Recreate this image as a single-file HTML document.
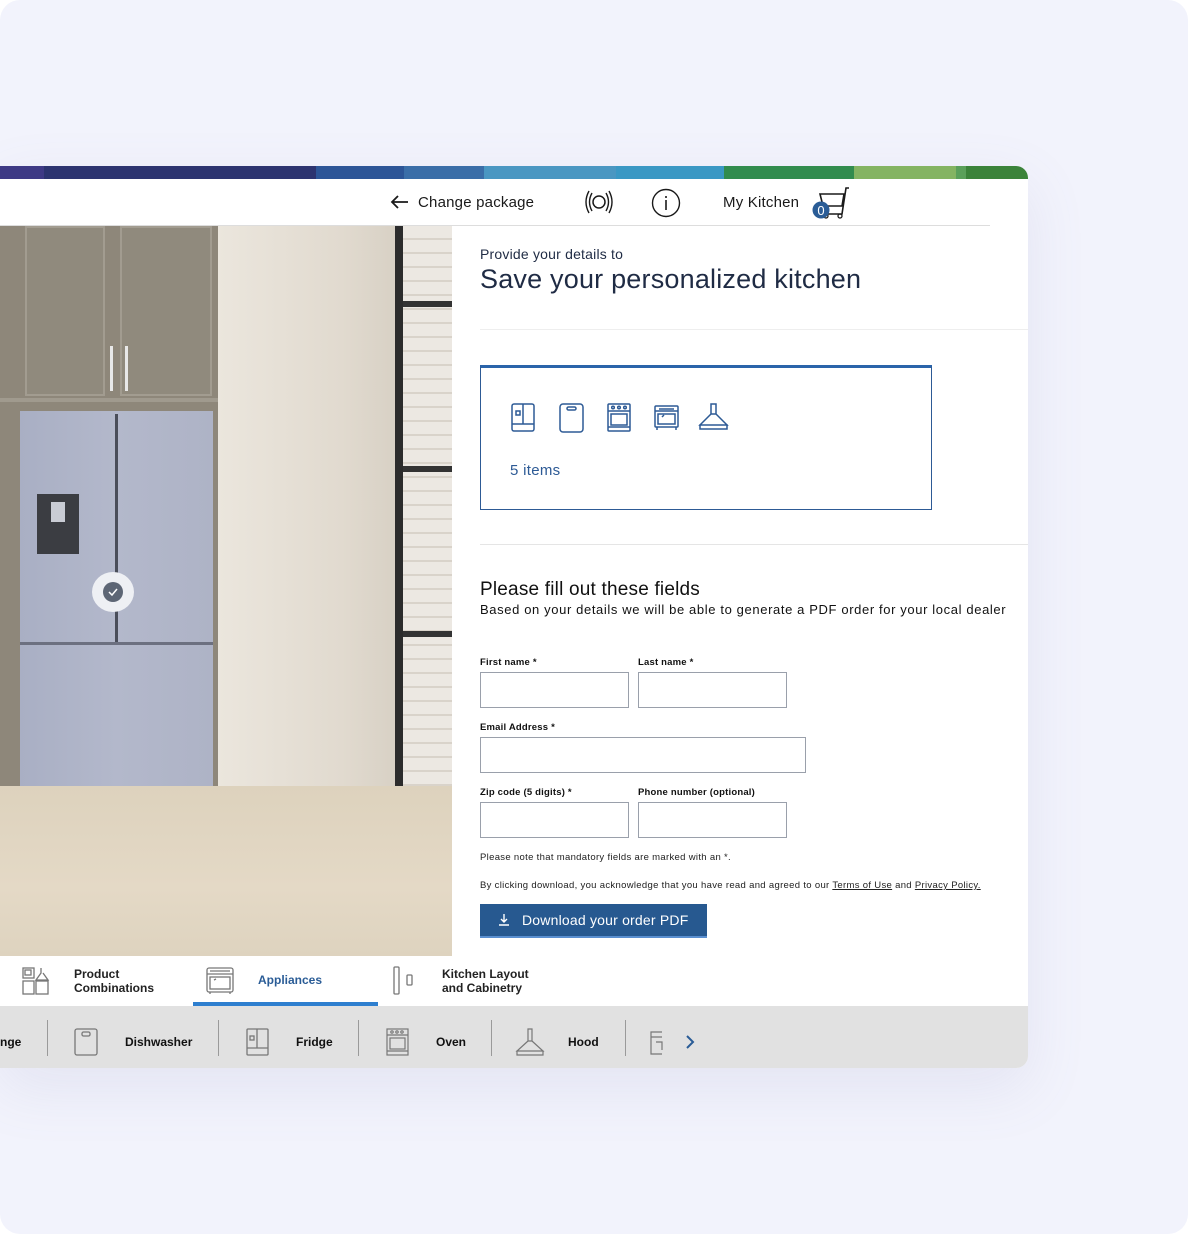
<!DOCTYPE html>
<html><head><meta charset="utf-8"><style>
*{box-sizing:border-box;margin:0;padding:0}
body{width:1188px;height:1234px;background:#fff;font-family:"Liberation Sans",sans-serif;color:#1f2b44;overflow:hidden;position:relative}
.bg{position:absolute;left:0;top:0;width:1188px;height:1234px;background:#f2f3fc;border-radius:20px}
.card{position:absolute;left:0;top:166px;width:1028px;height:902px;background:#fff;border-radius:0 12px 12px 0;overflow:hidden;box-shadow:0 20px 60px rgba(120,120,170,.12)}
.bar{position:absolute;left:0;top:0;height:13px;width:1028px;background:linear-gradient(90deg,#3e3a85 0 44px,#2c3470 44px 316px,#2c5597 316px 404px,#3a6ea8 404px 484px,#4a97c2 484px 616px,#3a98c4 616px 724px,#318c4e 724px 854px,#84b462 854px 956px,#5aa05a 956px 966px,#3b833a 966px)}
.abs{position:absolute}
.hdr{font-size:15px;color:#1a1a1a;letter-spacing:0.2px}
.img{position:absolute;left:0;top:60px;width:452px;height:730px;background:#e6e0d6;overflow:hidden}
.lbl{font-size:9.5px;font-weight:bold;color:#111;letter-spacing:0.2px}
.inp{position:absolute;border:1px solid #9aa0ab;height:36px;background:#fff}
.small{font-size:9.5px;color:#222;letter-spacing:0.32px}
.tab{font-size:12px;font-weight:bold;color:#222;line-height:14px}
.sub{font-size:12px;font-weight:bold;color:#111}
.sep{position:absolute;top:1020px;width:1px;height:36px;background:#9a9a9a}
</style></head><body>
<div class="bg"></div>
<div class="card">
<div class="bar"></div>
<svg class="abs" style="left:390px;top:28px" width="20" height="16" viewBox="0 0 20 16"><path d="M18 8H2M8 2L2 8l6 6" fill="none" stroke="#1a1a1a" stroke-width="1.8"/></svg>
<div class="abs hdr" style="left:418px;top:28px">Change package</div>
<svg class="abs" style="left:584px;top:24px" width="30" height="24" viewBox="0 0 30 24"><circle cx="15" cy="12" r="6" fill="none" stroke="#1a1a1a" stroke-width="1.5"/><path d="M8 3Q3 12 8 21M5 1Q-1 12 5 23M22 3Q27 12 22 21M25 1Q31 12 25 23" fill="none" stroke="#1a1a1a" stroke-width="1.4"/></svg>
<svg class="abs" style="left:651px;top:22px" width="30" height="30" viewBox="0 0 30 30"><circle cx="15" cy="15" r="13.5" fill="none" stroke="#1a1a1a" stroke-width="1.4"/><path d="M15 12v10M15 8v2" stroke="#1a1a1a" stroke-width="1.6"/></svg>
<div class="abs hdr" style="left:723px;top:28px">My Kitchen</div>
<svg class="abs" style="left:812px;top:20px" width="40" height="34" viewBox="0 0 40 34"><path d="M37 2h-3l-4 26H12M8 8h24l-2 12H11z" fill="none" stroke="#1a1a1a" stroke-width="1.6"/><circle cx="14" cy="30" r="2" fill="none" stroke="#1a1a1a" stroke-width="1.3"/><circle cx="28" cy="30" r="2" fill="none" stroke="#1a1a1a" stroke-width="1.3"/><circle cx="9" cy="24" r="8.5" fill="#2a5c96"/><text x="9" y="29" font-size="13" fill="#fff" text-anchor="middle" font-family="Liberation Sans">0</text></svg>
<div class="abs" style="left:0;top:59px;width:990px;height:1px;background:#ddd"></div>
<div class="img">
 <div class="abs" style="left:0;top:0;width:218px;height:560px;background:#8e877a"></div>
 <div class="abs" style="left:25px;top:0;width:80px;height:170px;background:#908a7d;border:2px solid #a29c90"></div>
 <div class="abs" style="left:120px;top:0;width:92px;height:170px;background:#908a7d;border:2px solid #a29c90"></div>
 <div class="abs" style="left:0;top:172px;width:218px;height:4px;background:#a09a8e"></div>
 <div class="abs" style="left:110px;top:120px;width:3px;height:45px;background:#e8e8e8"></div>
 <div class="abs" style="left:125px;top:120px;width:3px;height:45px;background:#e8e8e8"></div>
 <div class="abs" style="left:218px;top:0;width:177px;height:560px;background:linear-gradient(90deg,#ebe6dd,#e1dacf 70%,#d8d1c5)"></div>
 <div class="abs" style="left:395px;top:0;width:57px;height:600px;background:repeating-linear-gradient(180deg,#ece8e2 0 12px,#d9d3ca 12px 14px)"></div>
 <div class="abs" style="left:395px;top:0;width:8px;height:600px;background:#2c2c2c"></div>
 <div class="abs" style="left:403px;top:75px;width:49px;height:6px;background:#333"></div>
 <div class="abs" style="left:403px;top:240px;width:49px;height:6px;background:#333"></div>
 <div class="abs" style="left:403px;top:405px;width:49px;height:6px;background:#333"></div>
 <div class="abs" style="left:395px;top:560px;width:57px;height:8px;background:#333"></div>
 <div class="abs" style="left:0;top:560px;width:452px;height:170px;background:linear-gradient(180deg,#ddd2bd,#e4d9c6 60%,#ded3bf)"></div>
 <div class="abs" style="left:20px;top:185px;width:193px;height:375px;background:linear-gradient(90deg,#a9afc4,#b3b8cb 50%,#aeb3c6)"></div>
 <div class="abs" style="left:115px;top:188px;width:3px;height:228px;background:#4a4e5a"></div>
 <div class="abs" style="left:20px;top:416px;width:193px;height:3px;background:#6c7080"></div>
 <div class="abs" style="left:37px;top:268px;width:42px;height:60px;background:#3b3d42"></div>
 <div class="abs" style="left:51px;top:276px;width:14px;height:20px;background:#c9ccd4"></div>
 <div class="abs" style="left:92px;top:346px;width:42px;height:40px;border-radius:50%;background:#eef0f4"></div>
 <div class="abs" style="left:103px;top:356px;width:20px;height:20px;border-radius:50%;background:#5d6675"></div>
 <svg class="abs" style="left:105px;top:358px" width="16" height="16" viewBox="0 0 16 16"><path d="M4 8l3 3 5-6" fill="none" stroke="#fff" stroke-width="1.5"/></svg>
</div>
<div class="abs" style="left:480px;top:80px;font-size:14px;color:#1f2b44;letter-spacing:0.2px">Provide your details to</div>
<div class="abs" style="left:480px;top:98px;font-size:27px;color:#1f2b44;letter-spacing:0.2px">Save your personalized kitchen</div>
<div class="abs" style="left:480px;top:163px;width:548px;height:1px;background:#eee"></div>
<div class="abs" style="left:480px;top:199px;width:452px;height:145px;border:1px solid #2d5a95;border-top:3px solid #2a64aa"></div>
<svg class="abs" style="left:510px;top:236px" width="225" height="32" viewBox="0 0 225 32" fill="none" stroke="#2d5a95" stroke-width="1.5">
 <rect x="2" y="2" width="22" height="27" rx="2"/><path d="M13 2v20M2 22h22"/><rect x="6" y="9" width="4" height="4"/>
 <rect x="50" y="2" width="23" height="28" rx="3"/><rect x="57" y="5" width="9" height="3" rx="1.5"/>
 <rect x="98" y="2" width="22" height="27" rx="1"/><path d="M98 9h22"/><circle cx="103" cy="5.5" r="1.3"/><circle cx="109" cy="5.5" r="1.3"/><circle cx="115" cy="5.5" r="1.3"/><rect x="101" y="12" width="16" height="11"/><path d="M98 25h22"/>
 <rect x="145" y="4" width="23" height="21" rx="1"/><path d="M145 9h23M149 7h15" /><rect x="148" y="12" width="17" height="10"/><path d="M147 25v3M166 25v3M152 15l2 -2"/>
 <path d="M201 2h5v10h-5zM201 12l-11 11h27l-11-11M190 23h27v4h-27z"/>
</svg>
<div class="abs" style="left:510px;top:296px;font-size:15px;color:#2d5a95;letter-spacing:0.3px">5 items</div>
<div class="abs" style="left:480px;top:378px;width:548px;height:1px;background:#e5e5e5"></div>
<div class="abs" style="left:480px;top:413px;font-size:19px;color:#111;letter-spacing:0.2px">Please fill out these fields</div>
<div class="abs" style="left:480px;top:436px;font-size:13px;color:#111;letter-spacing:0.62px">Based on your details we will be able to generate a PDF order for your local dealer</div>
<div class="abs lbl" style="left:480px;top:491px">First name *</div>
<div class="abs lbl" style="left:638px;top:491px">Last name *</div>
<div class="inp" style="left:480px;top:506px;width:149px"></div>
<div class="inp" style="left:638px;top:506px;width:149px"></div>
<div class="abs lbl" style="left:480px;top:556px">Email Address *</div>
<div class="inp" style="left:480px;top:571px;width:326px"></div>
<div class="abs lbl" style="left:480px;top:621px">Zip code (5 digits) *</div>
<div class="abs lbl" style="left:638px;top:621px">Phone number (optional)</div>
<div class="inp" style="left:480px;top:636px;width:149px"></div>
<div class="inp" style="left:638px;top:636px;width:149px"></div>
<div class="abs small" style="left:480px;top:686px">Please note that mandatory fields are marked with an *.</div>
<div class="abs small" style="left:480px;top:714px">By clicking download, you acknowledge that you have read and agreed to our <u>Terms of Use</u> and <u>Privacy Policy.</u></div>
<div class="abs" style="left:480px;top:738px;width:227px;height:34px;background:#275990;border-bottom:2px solid #5a8fd0"></div>
<svg class="abs" style="left:498px;top:747px" width="12" height="14" viewBox="0 0 12 14"><path d="M6 1v8M3 6l3 3 3-3M1 12h10" fill="none" stroke="#fff" stroke-width="1.4"/></svg>
<div class="abs" style="left:522px;top:746px;font-size:14px;color:#fff;letter-spacing:0.2px">Download your order PDF</div>
<svg class="abs" style="left:22px;top:801px" width="28" height="28" viewBox="0 0 28 28" fill="none" stroke="#777" stroke-width="1.3"><rect x="1" y="1" width="11" height="10"/><rect x="3" y="3" width="6" height="5"/><path d="M19 1v5l-5 7h12l-5-7"/><rect x="1" y="14" width="11" height="13"/><rect x="14" y="14" width="12" height="13"/></svg>
<div class="abs tab" style="left:74px;top:801px">Product<br>Combinations</div>
<svg class="abs" style="left:205px;top:800px" width="30" height="30" viewBox="0 0 30 30" fill="none" stroke="#777" stroke-width="1.3"><rect x="2" y="2" width="26" height="24" rx="2"/><path d="M2 8h26M5 5h20"/><rect x="5" y="11" width="20" height="12"/><path d="M9 14l2-1M5 26v2M25 26v2"/></svg>
<div class="abs" style="left:258px;top:807px;font-size:12px;font-weight:bold;color:#2a5c96">Appliances</div>
<div class="abs" style="left:193px;top:836px;width:185px;height:4px;background:#2e7fcf"></div>
<div class="abs" style="left:280px;top:840px;width:0;height:0;border-left:6px solid transparent;border-right:6px solid transparent;border-top:6px solid #2e7fcf"></div>
<svg class="abs" style="left:392px;top:800px" width="24" height="30" viewBox="0 0 24 30" fill="none" stroke="#777" stroke-width="1.3"><rect x="2" y="1" width="5" height="27" rx="1"/><rect x="15" y="9" width="5" height="10" rx="1"/></svg>
<div class="abs tab" style="left:442px;top:801px">Kitchen Layout<br>and Cabinetry</div>
<div class="abs" style="left:0;top:840px;width:1028px;height:62px;background:#e1e1e1"></div>
</div>
<div class="abs sub" style="left:0;top:1035px">nge</div>
<div class="sep" style="left:47px"></div>
<svg class="abs" style="left:73px;top:1027px" width="26" height="30" viewBox="0 0 26 30" fill="none" stroke="#777" stroke-width="1.3"><rect x="2" y="2" width="22" height="26" rx="2"/><rect x="9" y="5" width="8" height="4" rx="1.5"/></svg>
<div class="abs sub" style="left:125px;top:1035px">Dishwasher</div>
<div class="sep" style="left:218px"></div>
<svg class="abs" style="left:245px;top:1027px" width="26" height="30" viewBox="0 0 26 30" fill="none" stroke="#777" stroke-width="1.3"><rect x="2" y="2" width="21" height="26" rx="1"/><path d="M12 2v19M2 21h21"/><rect x="5" y="9" width="4" height="4"/></svg>
<div class="abs sub" style="left:296px;top:1035px">Fridge</div>
<div class="sep" style="left:358px"></div>
<svg class="abs" style="left:385px;top:1027px" width="26" height="30" viewBox="0 0 26 30" fill="none" stroke="#777" stroke-width="1.2"><rect x="2" y="2" width="21" height="26"/><path d="M2 8h21"/><circle cx="7" cy="5" r="1.2"/><circle cx="12" cy="5" r="1.2"/><circle cx="17" cy="5" r="1.2"/><rect x="5" y="11" width="15" height="11"/><path d="M2 24h21"/></svg>
<div class="abs sub" style="left:436px;top:1035px">Oven</div>
<div class="sep" style="left:491px"></div>
<svg class="abs" style="left:514px;top:1027px" width="32" height="30" viewBox="0 0 32 30" fill="none" stroke="#777" stroke-width="1.2"><path d="M14 2h4v12h-4zM14 14L3 24h26L18 14M3 24h26v4H3z"/></svg>
<div class="abs sub" style="left:568px;top:1035px">Hood</div>
<div class="sep" style="left:625px"></div>
<svg class="abs" style="left:648px;top:1030px" width="16" height="26" viewBox="0 0 16 26" fill="none" stroke="#777" stroke-width="1.2"><path d="M14 2H3v22h11M3 7h11M8 12h6v8"/></svg>
<svg class="abs" style="left:684px;top:1034px" width="12" height="16" viewBox="0 0 12 16"><path d="M3 2l6 6-6 6" fill="none" stroke="#2a5c96" stroke-width="2"/></svg>
</body></html>
